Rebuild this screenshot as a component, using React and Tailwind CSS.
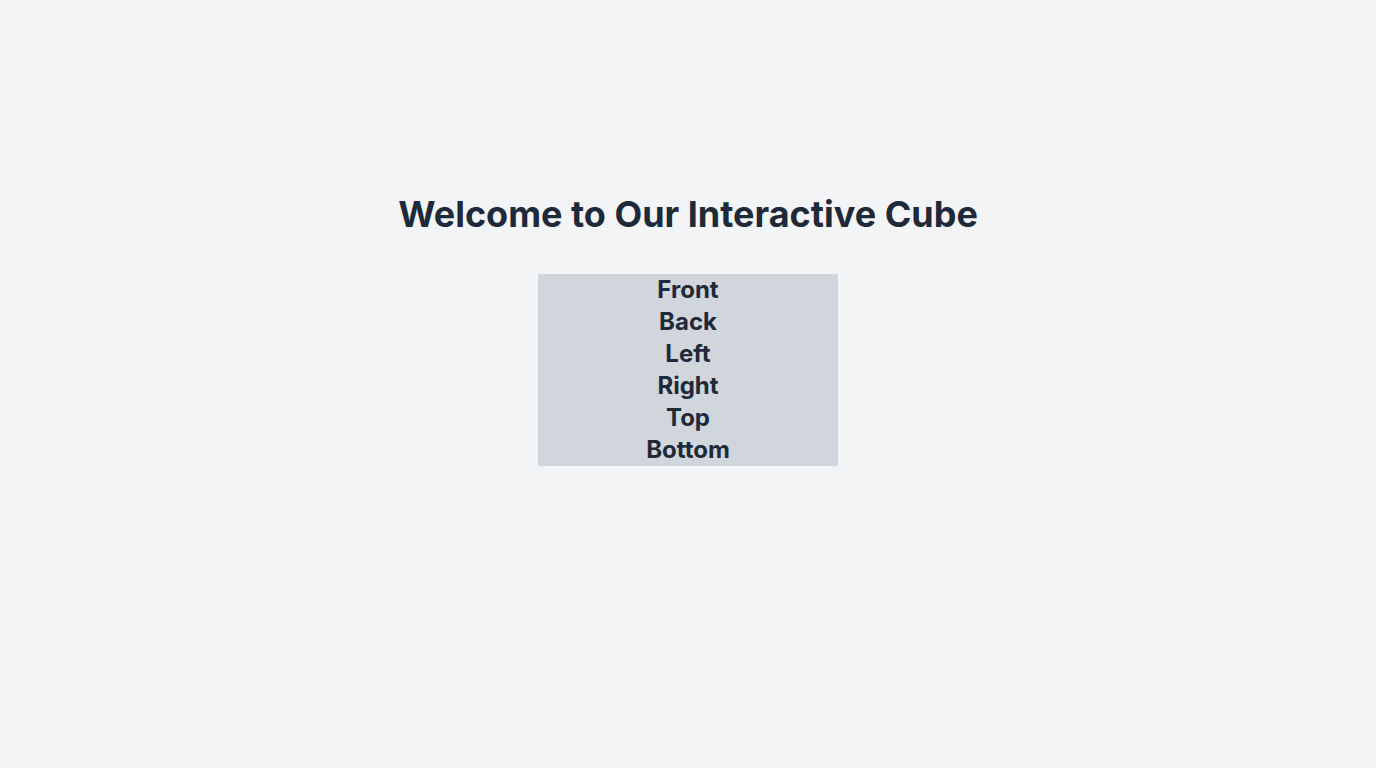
const faces = ["Front", "Back", "Left", "Right", "Top", "Bottom"];

// Landing screen => title plus the cube's face list
export default function App() {
  return (
    <div
      className="min-h-screen bg-gray-100 flex flex-col items-center justify-center text-gray-800"
      style={{ fontFamily: "Inter, 'Noto Sans', sans-serif" }}
    >
      <h1 className="text-4xl font-bold mb-10">Welcome to Our Interactive Cube</h1>

      {/* Cube stage => faces stacked, no 3D transform applied */}
      <div className="w-[300px] h-[300px]">
        <div className="bg-gray-300 flex flex-col items-center">
          {faces.map((face) => (
            <div key={face} className="text-2xl font-bold">
              {face}
            </div>
          ))}
        </div>
      </div>
    </div>
  );
}
